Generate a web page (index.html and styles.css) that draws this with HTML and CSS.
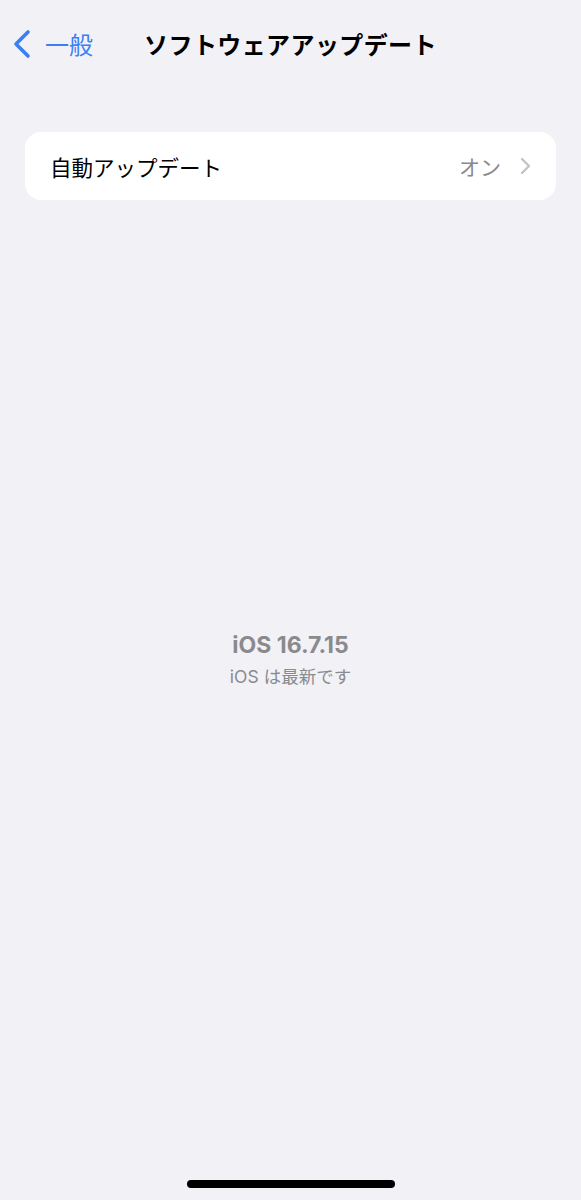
FILE: index.html
```html
<!DOCTYPE html>
<html lang="ja">
<head>
    <meta charset="UTF-8">
    <title>ソフトウェアアップデート</title>
    <link rel="stylesheet" href="styles.css">
</head>
<body>
    <div id="screen">
        <div id="navbar">
            <a class="back" href="#">
                <svg class="back-chevron" width="20" height="30" viewBox="0 0 20 30">
                    <path d="M16 3 L4 15 L16 27" fill="none" stroke="currentColor" stroke-width="3.6" stroke-linecap="round" stroke-linejoin="round"/>
                </svg>
                <span>一般</span>
            </a>
            <div class="nav-title">ソフトウェアアップデート</div>
            <div></div>
        </div>

        <div class="group">
            <div class="row">
                <span class="row-label">自動アップデート</span>
                <span class="row-value">オン</span>
                <svg class="row-chevron" width="12" height="18" viewBox="0 0 12 18">
                    <path d="M3 2 L10 9 L3 16" fill="none" stroke="currentColor" stroke-width="2.4" stroke-linecap="round" stroke-linejoin="round"/>
                </svg>
            </div>
        </div>

        <div id="status">
            <div class="version">iOS 16.7.15</div>
            <div class="status-note">iOS は最新です</div>
        </div>

        <div id="home-indicator"></div>
    </div>
</body>
</html>
```

FILE: styles.css
```css
body {
    margin: 0;
    background-color: #f1f1f6;
    font-family: "Inter", "Noto Sans CJK JP", sans-serif;
    color: #000;
}

#screen {
    display: flex;
    flex-direction: column;
    height: 1200px;
}

#navbar {
    display: grid;
    grid-template-columns: 1fr auto 1fr;
    align-items: center;
    height: 87px;
    padding: 0 14px;
}

.back {
    display: flex;
    align-items: center;
    gap: 13px;
    color: #3a7ff6;
    text-decoration: none;
    font-size: 24px;
}

.back-chevron {
    margin-left: -2px;
}

.nav-title {
    font-size: 24px;
    font-weight: 700;
    letter-spacing: 0.4px;
}

.group {
    margin: 45px 25px 0 25px;
    background: #fff;
    border-radius: 16px;
}

.row {
    display: flex;
    align-items: center;
    height: 68px;
    padding: 0 25px 0 25px;
}

.row-label {
    flex: 1;
    font-size: 21.5px;
}

.row-value {
    font-size: 21px;
    color: #8a8a8e;
    margin-right: 18px;
}

.row-chevron {
    color: #c4c4c8;
}

#status {
    margin-top: 430px;
    text-align: center;
    color: #8a8a8e;
}

.version {
    font-size: 23px;
    font-weight: 700;
    line-height: 30px;
}

.status-note {
    font-size: 17.5px;
    line-height: 24px;
    margin-top: 5px;
}

#home-indicator {
    margin: auto auto 12px auto;
    width: 208px;
    height: 8px;
    border-radius: 4px;
    background: #000;
}
```
